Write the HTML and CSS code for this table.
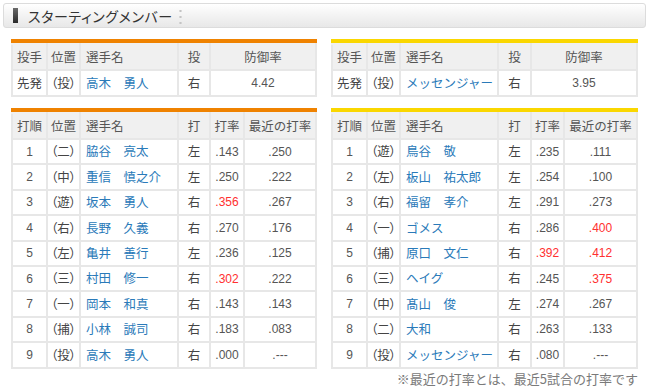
FILE: index.html
```html
<!DOCTYPE html>
<html lang="ja">
<head>
<meta charset="utf-8">
<title>スターティングメンバー</title>
<link rel="stylesheet" href="styles.css">
</head>
<body>
<div class="page">
  <div class="title-bar">
    <span class="mark"></span>
    <h1 class="title">スターティングメンバー</h1>
    <span class="dots"></span>
  </div>

  <div class="teams">
    <div class="team team-left">
      <div class="tbl tbl-orange">
        <table class="grid">
          <colgroup><col class="w35"><col class="w33"><col class="w98"><col class="w32"><col></colgroup>
          <tr class="head"><th class="c">投手</th><th class="c">位置</th><th class="l">選手名</th><th class="c">投</th><th class="c">防御率</th></tr>
          <tr class="row26"><td class="c">先発</td><td class="c pos">（投）</td><td class="l"><a class="name">高木　勇人</a></td><td class="c">右</td><td class="c num">4.42</td></tr>
        </table>
      </div>
      <div class="tbl tbl-orange">
        <table class="grid">
          <colgroup><col class="w35"><col class="w33"><col class="w98"><col class="w32"><col class="w34"><col></colgroup>
          <tr class="head"><th class="c">打順</th><th class="c">位置</th><th class="l">選手名</th><th class="c">打</th><th class="c">打率</th><th class="c">最近の打率</th></tr>
          <tr><td class="c num">1</td><td class="c pos">（二）</td><td class="l"><a class="name">脇谷　亮太</a></td><td class="c">左</td><td class="c num">.143</td><td class="c num">.250</td></tr>
          <tr><td class="c num">2</td><td class="c pos">（中）</td><td class="l"><a class="name">重信　慎之介</a></td><td class="c">左</td><td class="c num">.250</td><td class="c num">.222</td></tr>
          <tr><td class="c num">3</td><td class="c pos">（遊）</td><td class="l"><a class="name">坂本　勇人</a></td><td class="c">右</td><td class="c num hot">.356</td><td class="c num">.267</td></tr>
          <tr><td class="c num">4</td><td class="c pos">（右）</td><td class="l"><a class="name">長野　久義</a></td><td class="c">右</td><td class="c num">.270</td><td class="c num">.176</td></tr>
          <tr><td class="c num">5</td><td class="c pos">（左）</td><td class="l"><a class="name">亀井　善行</a></td><td class="c">左</td><td class="c num">.236</td><td class="c num">.125</td></tr>
          <tr><td class="c num">6</td><td class="c pos">（三）</td><td class="l"><a class="name">村田　修一</a></td><td class="c">右</td><td class="c num hot">.302</td><td class="c num">.222</td></tr>
          <tr><td class="c num">7</td><td class="c pos">（一）</td><td class="l"><a class="name">岡本　和真</a></td><td class="c">右</td><td class="c num">.143</td><td class="c num">.143</td></tr>
          <tr><td class="c num">8</td><td class="c pos">（捕）</td><td class="l"><a class="name">小林　誠司</a></td><td class="c">右</td><td class="c num">.183</td><td class="c num">.083</td></tr>
          <tr><td class="c num">9</td><td class="c pos">（投）</td><td class="l"><a class="name">高木　勇人</a></td><td class="c">右</td><td class="c num">.000</td><td class="c num">.---</td></tr>
        </table>
      </div>
    </div>

    <div class="team team-right">
      <div class="tbl tbl-yellow">
        <table class="grid">
          <colgroup><col class="w35"><col class="w33"><col class="w98"><col class="w33"><col></colgroup>
          <tr class="head"><th class="c">投手</th><th class="c">位置</th><th class="l">選手名</th><th class="c">投</th><th class="c">防御率</th></tr>
          <tr class="row26"><td class="c">先発</td><td class="c pos">（投）</td><td class="l"><a class="name">メッセンジャー</a></td><td class="c">右</td><td class="c num">3.95</td></tr>
        </table>
      </div>
      <div class="tbl tbl-yellow">
        <table class="grid">
          <colgroup><col class="w35"><col class="w33"><col class="w98"><col class="w33"><col class="w33"><col></colgroup>
          <tr class="head"><th class="c">打順</th><th class="c">位置</th><th class="l">選手名</th><th class="c">打</th><th class="c">打率</th><th class="c">最近の打率</th></tr>
          <tr><td class="c num">1</td><td class="c pos">（遊）</td><td class="l"><a class="name">鳥谷　敬</a></td><td class="c">左</td><td class="c num">.235</td><td class="c num">.111</td></tr>
          <tr><td class="c num">2</td><td class="c pos">（左）</td><td class="l"><a class="name">板山　祐太郎</a></td><td class="c">左</td><td class="c num">.254</td><td class="c num">.100</td></tr>
          <tr><td class="c num">3</td><td class="c pos">（右）</td><td class="l"><a class="name">福留　孝介</a></td><td class="c">左</td><td class="c num">.291</td><td class="c num">.273</td></tr>
          <tr><td class="c num">4</td><td class="c pos">（一）</td><td class="l"><a class="name">ゴメス</a></td><td class="c">右</td><td class="c num">.286</td><td class="c num hot">.400</td></tr>
          <tr><td class="c num">5</td><td class="c pos">（捕）</td><td class="l"><a class="name">原口　文仁</a></td><td class="c">右</td><td class="c num hot">.392</td><td class="c num hot">.412</td></tr>
          <tr><td class="c num">6</td><td class="c pos">（三）</td><td class="l"><a class="name">ヘイグ</a></td><td class="c">右</td><td class="c num">.245</td><td class="c num hot">.375</td></tr>
          <tr><td class="c num">7</td><td class="c pos">（中）</td><td class="l"><a class="name">髙山　俊</a></td><td class="c">左</td><td class="c num">.274</td><td class="c num">.267</td></tr>
          <tr><td class="c num">8</td><td class="c pos">（二）</td><td class="l"><a class="name">大和</a></td><td class="c">右</td><td class="c num">.263</td><td class="c num">.133</td></tr>
          <tr><td class="c num">9</td><td class="c pos">（投）</td><td class="l"><a class="name">メッセンジャー</a></td><td class="c">右</td><td class="c num">.080</td><td class="c num">.---</td></tr>
        </table>
      </div>
    </div>
  </div>

  <p class="note">※最近の打率とは、最近5試合の打率です</p>
</div>
</body>
</html>
```

FILE: styles.css
```css
* { box-sizing: border-box; }

html, body {
  margin: 0;
  background: #ffffff;
}

body {
  font-family: "Noto Sans CJK JP", "Noto Sans", sans-serif;
  color: #444;
}

.page {
  width: 650px;
  padding: 3px 4px 0 3px;
}

/* title bar */
.title-bar {
  height: 25px;
  display: flex;
  align-items: center;
  padding-left: 9px;
  border: 1px solid #dcdcdc;
  border-radius: 3px;
  background: linear-gradient(#ffffff, #f4f4f4 45%, #e8e8e8);
}

.mark {
  width: 5px;
  height: 15px;
  margin-right: 10px;
  background: linear-gradient(#6a6a6a, #2a2a2a);
}

.title {
  margin: 0;
  font-size: 14px;
  font-weight: normal;
  line-height: 1;
  color: #333;
  font-feature-settings: "palt";
  letter-spacing: 0.6px;
}

.dots {
  width: 3px;
  height: 16px;
  margin-left: 6px;
  background: radial-gradient(circle, #c4c4c4 0.9px, transparent 1.4px) 0 0 / 3px 6px repeat-y;
}

/* teams */
.teams {
  display: flex;
  gap: 14px;
  margin: 11px 0 0 8px;
}

.team {
  display: flex;
  flex-direction: column;
  gap: 11px;
}

.team-left { width: 306px; }
.team-right { width: 307px; }

.tbl-orange { border-top: 4px solid #ef8200; }
.tbl-yellow { border-top: 4px solid #fad700; }

.grid {
  width: 100%;
  border-collapse: collapse;
  table-layout: fixed;
}

.w35 { width: 35px; }
.w33 { width: 33px; }
.w98 { width: 98px; }
.w32 { width: 32px; }
.w34 { width: 34px; }

.grid th,
.grid td {
  border: 2px solid #e7e7e7;
  padding: 0 3px;
  font-size: 12.5px;
  font-weight: normal;
  line-height: 1;
  white-space: nowrap;
  overflow: hidden;
}

.grid th {
  background: #f0f0f0;
  color: #555;
  height: 26px;
  border-top-color: #f0f0f0;
}

.grid td {
  height: 25.4px;
  color: #444;
}

.grid .row26 td { height: 26px; }

.c { text-align: center; }
.l { text-align: left; }

.grid th.l,
.grid td.l { padding-left: 5px; }

.pos {
  font-feature-settings: "palt";
  color: #555;
}

.num {
  font-family: "Liberation Sans", Arial, sans-serif;
  font-size: 12px !important;
  color: #555 !important;
}

.num.hot { color: #ff3030 !important; }

.name {
  color: #2a7ab9;
  text-decoration: none;
}

.note {
  margin: 2px 8px 0 0;
  text-align: right;
  font-size: 13px;
  line-height: 15px;
  color: #7a7a7a;
}
```
